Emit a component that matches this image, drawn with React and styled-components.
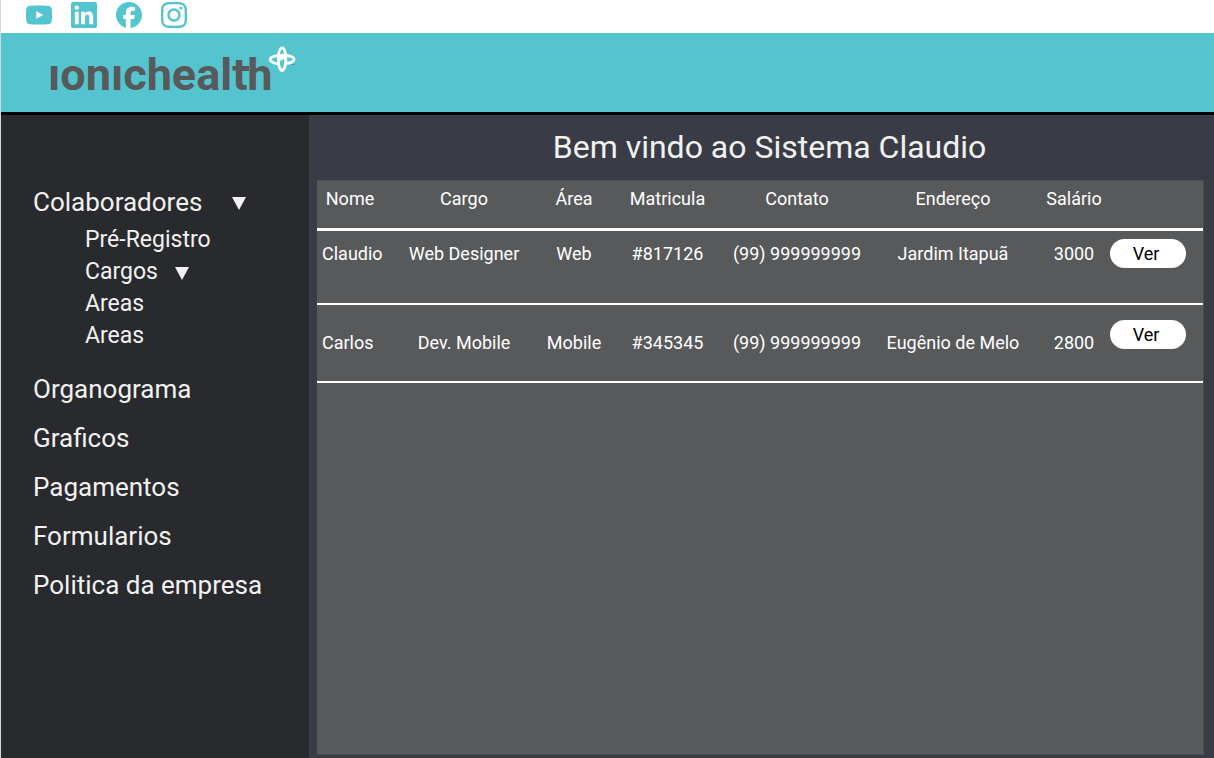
import React from "react";
import styled, { createGlobalStyle } from "styled-components";
import { SiFacebook, SiInstagram } from "react-icons/si";

const GlobalStyle = createGlobalStyle`
  *, *::before, *::after { box-sizing: border-box; }
  body {
    margin: 0;
    font-family: Roboto, "Liberation Sans", sans-serif;
    background: #3a3c45;
  }
`;

const Page = styled.div`
  min-height: 100vh;
  display: flex;
  flex-direction: column;
  border-left: 1px solid #cdd8e2;
`;

const SocialBar = styled.nav`
  display: flex;
  align-items: center;
  gap: 19px;
  height: 33px;
  padding: 0 25px 3px;
  background: #fff;
`;

const SocialLink = styled.a`
  display: flex;
  color: #54c4cf;
  svg {
    width: 26px;
    height: 26px;
    fill: currentColor;
  }
`;

const Header = styled.header`
  height: 82px;
  padding: 10px 46px;
  background: #54c4cf;
  border-bottom: 3px solid #030304;
`;

const LogoLink = styled.a`
  display: inline-block;
  svg { display: block; }
  text {
    font-family: Roboto, "Liberation Sans", sans-serif;
    font-weight: 700;
    fill: #58595b;
  }
`;

const Body = styled.div`
  flex: 1;
  display: grid;
  grid-template-columns: 308px minmax(0, 1fr);
`;

const Sidebar = styled.nav`
  padding: 65px 16px 24px 32px;
  background: #292a2d;
`;

const Menu = styled.ul`
  display: flex;
  flex-direction: column;
  gap: 5px;
  margin: 0;
  padding: 0;
  list-style: none;
`;

const SubMenu = styled(Menu)`
  gap: 0;
  padding: 0 0 10px 52px;
`;

const MenuRow = styled.div`
  display: flex;
  align-items: center;
  gap: ${(p) => (p.$sub ? 17 : 30)}px;
  height: ${(p) => (p.$sub ? 32 : 44)}px;
`;

const MenuLink = styled.a`
  color: #f1f1f1;
  font-size: ${(p) => (p.$sub ? 23 : 26)}px;
  line-height: 32px;
  text-decoration: none;
  white-space: nowrap;
`;

const CaretButton = styled.button`
  display: flex;
  padding: 3px 0 0;
  border: 0;
  background: none;
  color: #f1f1f1;
  cursor: pointer;
`;

const Main = styled.main`
  display: flex;
  flex-direction: column;
  padding: 0 10px 3px 8px;
  background: #3a3c45;
`;

const Title = styled.h1`
  margin: 0;
  padding: 0 0 0 18px;
  color: #f1f1f1;
  font-size: 32px;
  font-weight: 400;
  line-height: 65px;
  text-align: center;
`;

const Panel = styled.section`
  flex: 1;
  background: #58595b;
  border: solid #4c4d51;
  border-width: 1px 1px 1px 0;
`;

const Table = styled.table`
  width: 100%;
  table-layout: fixed;
  border-collapse: separate;
  border-spacing: 0;
  color: #fff;
  font-size: 18px;
  line-height: 24px;
`;

const HeadCell = styled.th`
  height: 50px;
  padding: 6px 0 0;
  border-bottom: 3px solid #fff;
  font-weight: 400;
  vertical-align: top;
  white-space: nowrap;
`;

const Row = styled.tr`
  height: ${(p) => (p.$low ? 78 : 74)}px;
  --text-top: ${(p) => (p.$low ? 26 : 11)}px;
  --action-top: ${(p) => (p.$low ? 15 : 8)}px;
`;

const Cell = styled.td`
  padding: var(--text-top) 0 0;
  border-bottom: 2px solid #fff;
  text-align: center;
  vertical-align: top;
  white-space: nowrap;
`;

const NameCell = styled(Cell)`
  padding-left: 5px;
  text-align: left;
`;

const ActionCell = styled(Cell)`
  padding: var(--action-top) 0 0 6px;
  text-align: left;
`;

const ViewButton = styled.button`
  display: block;
  width: 76px;
  height: 29px;
  padding: 0 4px 0 0;
  border: 0;
  border-radius: 15px;
  background: #fff;
  color: #000;
  font: 400 18px Roboto, "Liberation Sans", sans-serif;
  cursor: pointer;
`;

const YoutubeIcon = () => (
  <svg viewBox="0 0 26 26" aria-hidden="true">
    <path
      fillRule="evenodd"
      d="M13 3.500C18 3.500 21.500 3.700 23 4C24.700 4.400 25.500 5.400 25.700 7C26.100 10.500 26.100 15.500 25.700 19C25.500 20.600 24.700 21.500 23 21.900C21.500 22.300 18 22.500 13 22.500C8 22.500 4.500 22.300 3 21.900C1.300 21.500 .5 20.600 .3 19C-.1 15.500-.1 10.500 .3 7C.5 5.400 1.300 4.400 3 4C4.500 3.700 8 3.500 13 3.500ZM10.300 9.200V16.800L17.200 13Z"
    />
  </svg>
);

const LinkedinIcon = () => (
  <svg viewBox="0 0 24 24" aria-hidden="true">
    <path d="M20.447 20.452h-3.554v-5.569c0-1.328-.027-3.037-1.852-3.037-1.853 0-2.136 1.445-2.136 2.939v5.667H9.351V9h3.414v1.561h.046c.477-.9 1.637-1.85 3.37-1.85 3.601 0 4.267 2.37 4.267 5.455v6.286zM5.337 7.433c-1.144 0-2.063-.926-2.063-2.065 0-1.138.92-2.063 2.063-2.063 1.14 0 2.064.925 2.064 2.063 0 1.139-.925 2.065-2.064 2.065zm1.782 13.019H3.555V9h3.564v11.452zM22.225 0H1.771C.792 0 0 .774 0 1.729v20.542C0 23.227.792 24 1.771 24h20.451C23.2 24 24 23.227 24 22.271V1.729C24 .774 23.2 0 22.222 0h.003z" />
  </svg>
);

const Logo = () => (
  <svg width="256" height="60" viewBox="0 0 256 60" role="img" aria-label="ionichealth">
    <text x="1" y="47" fontSize="45">ıonıchealth</text>
    <rect x="194" y="23" width="8" height="5" fill="#58595b" />
    {/* orbit mark: an upright ring crossed by a flat one */}
    <path
      fill="#fff"
      fillRule="evenodd"
      d="M235.300 3.500C238.500 3.500 240.200 9 240.200 16C240.200 23 238.300 29 235.300 29C232 29 230 23 230 16C230 9 232 3.500 235.300 3.500ZM235 6.500C233.800 6.500 233 9 232.800 12L237 11.500C236.800 8.500 236.200 6.500 235 6.500ZM232.800 18C233 22.500 233.800 25.500 235 25.500C236.500 25.500 237.300 21.500 237.300 16Z"
    />
    <g fill="none" stroke="#fff" strokeLinecap="round">
      <path d="M231 12.300C226 13.200 223 14.800 223.200 16.500C223.500 18.500 227 20.300 231.500 21" strokeWidth="2.800" />
      <path d="M231 13C239 11 247.500 13.500 247 16.800C246.700 18.700 243.500 20 239 20.500" strokeWidth="2.800" />
    </g>
    <text x="245" y="24" fontSize="4">™</text>
  </svg>
);

const Caret = () => (
  <svg width="14" height="13" viewBox="0 0 14 13" fill="currentColor" aria-hidden="true">
    <path d="M0 0H14L7 13Z" />
  </svg>
);

const social = [
  { name: "YouTube", Icon: YoutubeIcon },
  { name: "LinkedIn", Icon: LinkedinIcon },
  { name: "Facebook", Icon: SiFacebook },
  { name: "Instagram", Icon: SiInstagram },
];

const subItems = [
  { label: "Pré-Registro" },
  { label: "Cargos", caret: true },
  { label: "Areas" },
  { label: "Areas" },
];

const items = ["Organograma", "Graficos", "Pagamentos", "Formularios", "Politica da empresa"];

const columns = [
  { label: "Nome", width: 66 },
  { label: "Cargo", width: 162 },
  { label: "Área", width: 58 },
  { label: "Matricula", width: 129 },
  { label: "Contato", width: 130 },
  { label: "Endereço", width: 182 },
  { label: "Salário", width: 60 },
];

const people = [
  ["Claudio", "Web Designer", "Web", "#817126", "(99) 999999999", "Jardim Itapuã", "3000"],
  ["Carlos", "Dev. Mobile", "Mobile", "#345345", "(99) 999999999", "Eugênio de Melo", "2800"],
];

export default function App() {
  return (
    <Page>
      <GlobalStyle />
      <SocialBar aria-label="Redes sociais">
        {social.map(({ name, Icon }) => (
          <SocialLink key={name} href="#" aria-label={name}>
            <Icon />
          </SocialLink>
        ))}
      </SocialBar>
      <Header>
        <LogoLink href="#">
          <Logo />
        </LogoLink>
      </Header>
      <Body>
        <Sidebar aria-label="Menu">
          <Menu>
            <li>
              <MenuRow>
                <MenuLink href="#">Colaboradores</MenuLink>
                <CaretButton type="button" aria-label="Abrir Colaboradores">
                  <Caret />
                </CaretButton>
              </MenuRow>
              <SubMenu>
                {subItems.map(({ label, caret }, i) => (
                  <li key={i}>
                    <MenuRow $sub>
                      <MenuLink $sub href="#">{label}</MenuLink>
                      {caret && (
                        <CaretButton type="button" aria-label={`Abrir ${label}`}>
                          <Caret />
                        </CaretButton>
                      )}
                    </MenuRow>
                  </li>
                ))}
              </SubMenu>
            </li>
            {items.map((label) => (
              <li key={label}>
                <MenuRow>
                  <MenuLink href="#">{label}</MenuLink>
                </MenuRow>
              </li>
            ))}
          </Menu>
        </Sidebar>
        <Main>
          <Title>Bem vindo ao Sistema Claudio</Title>
          <Panel>
            <Table>
              <colgroup>
                {columns.map((c) => (
                  <col key={c.label} width={c.width} />
                ))}
                <col width={99} />
              </colgroup>
              <thead>
                <tr>
                  {columns.map((c) => (
                    <HeadCell key={c.label} scope="col">{c.label}</HeadCell>
                  ))}
                  <HeadCell as="td" />
                </tr>
              </thead>
              <tbody>
                {people.map(([name, ...values], i) => (
                  <Row key={name} $low={i > 0}>
                    <NameCell>{name}</NameCell>
                    {values.map((value, j) => (
                      <Cell key={j}>{value}</Cell>
                    ))}
                    <ActionCell>
                      <ViewButton type="button">Ver</ViewButton>
                    </ActionCell>
                  </Row>
                ))}
              </tbody>
            </Table>
          </Panel>
        </Main>
      </Body>
    </Page>
  );
}
